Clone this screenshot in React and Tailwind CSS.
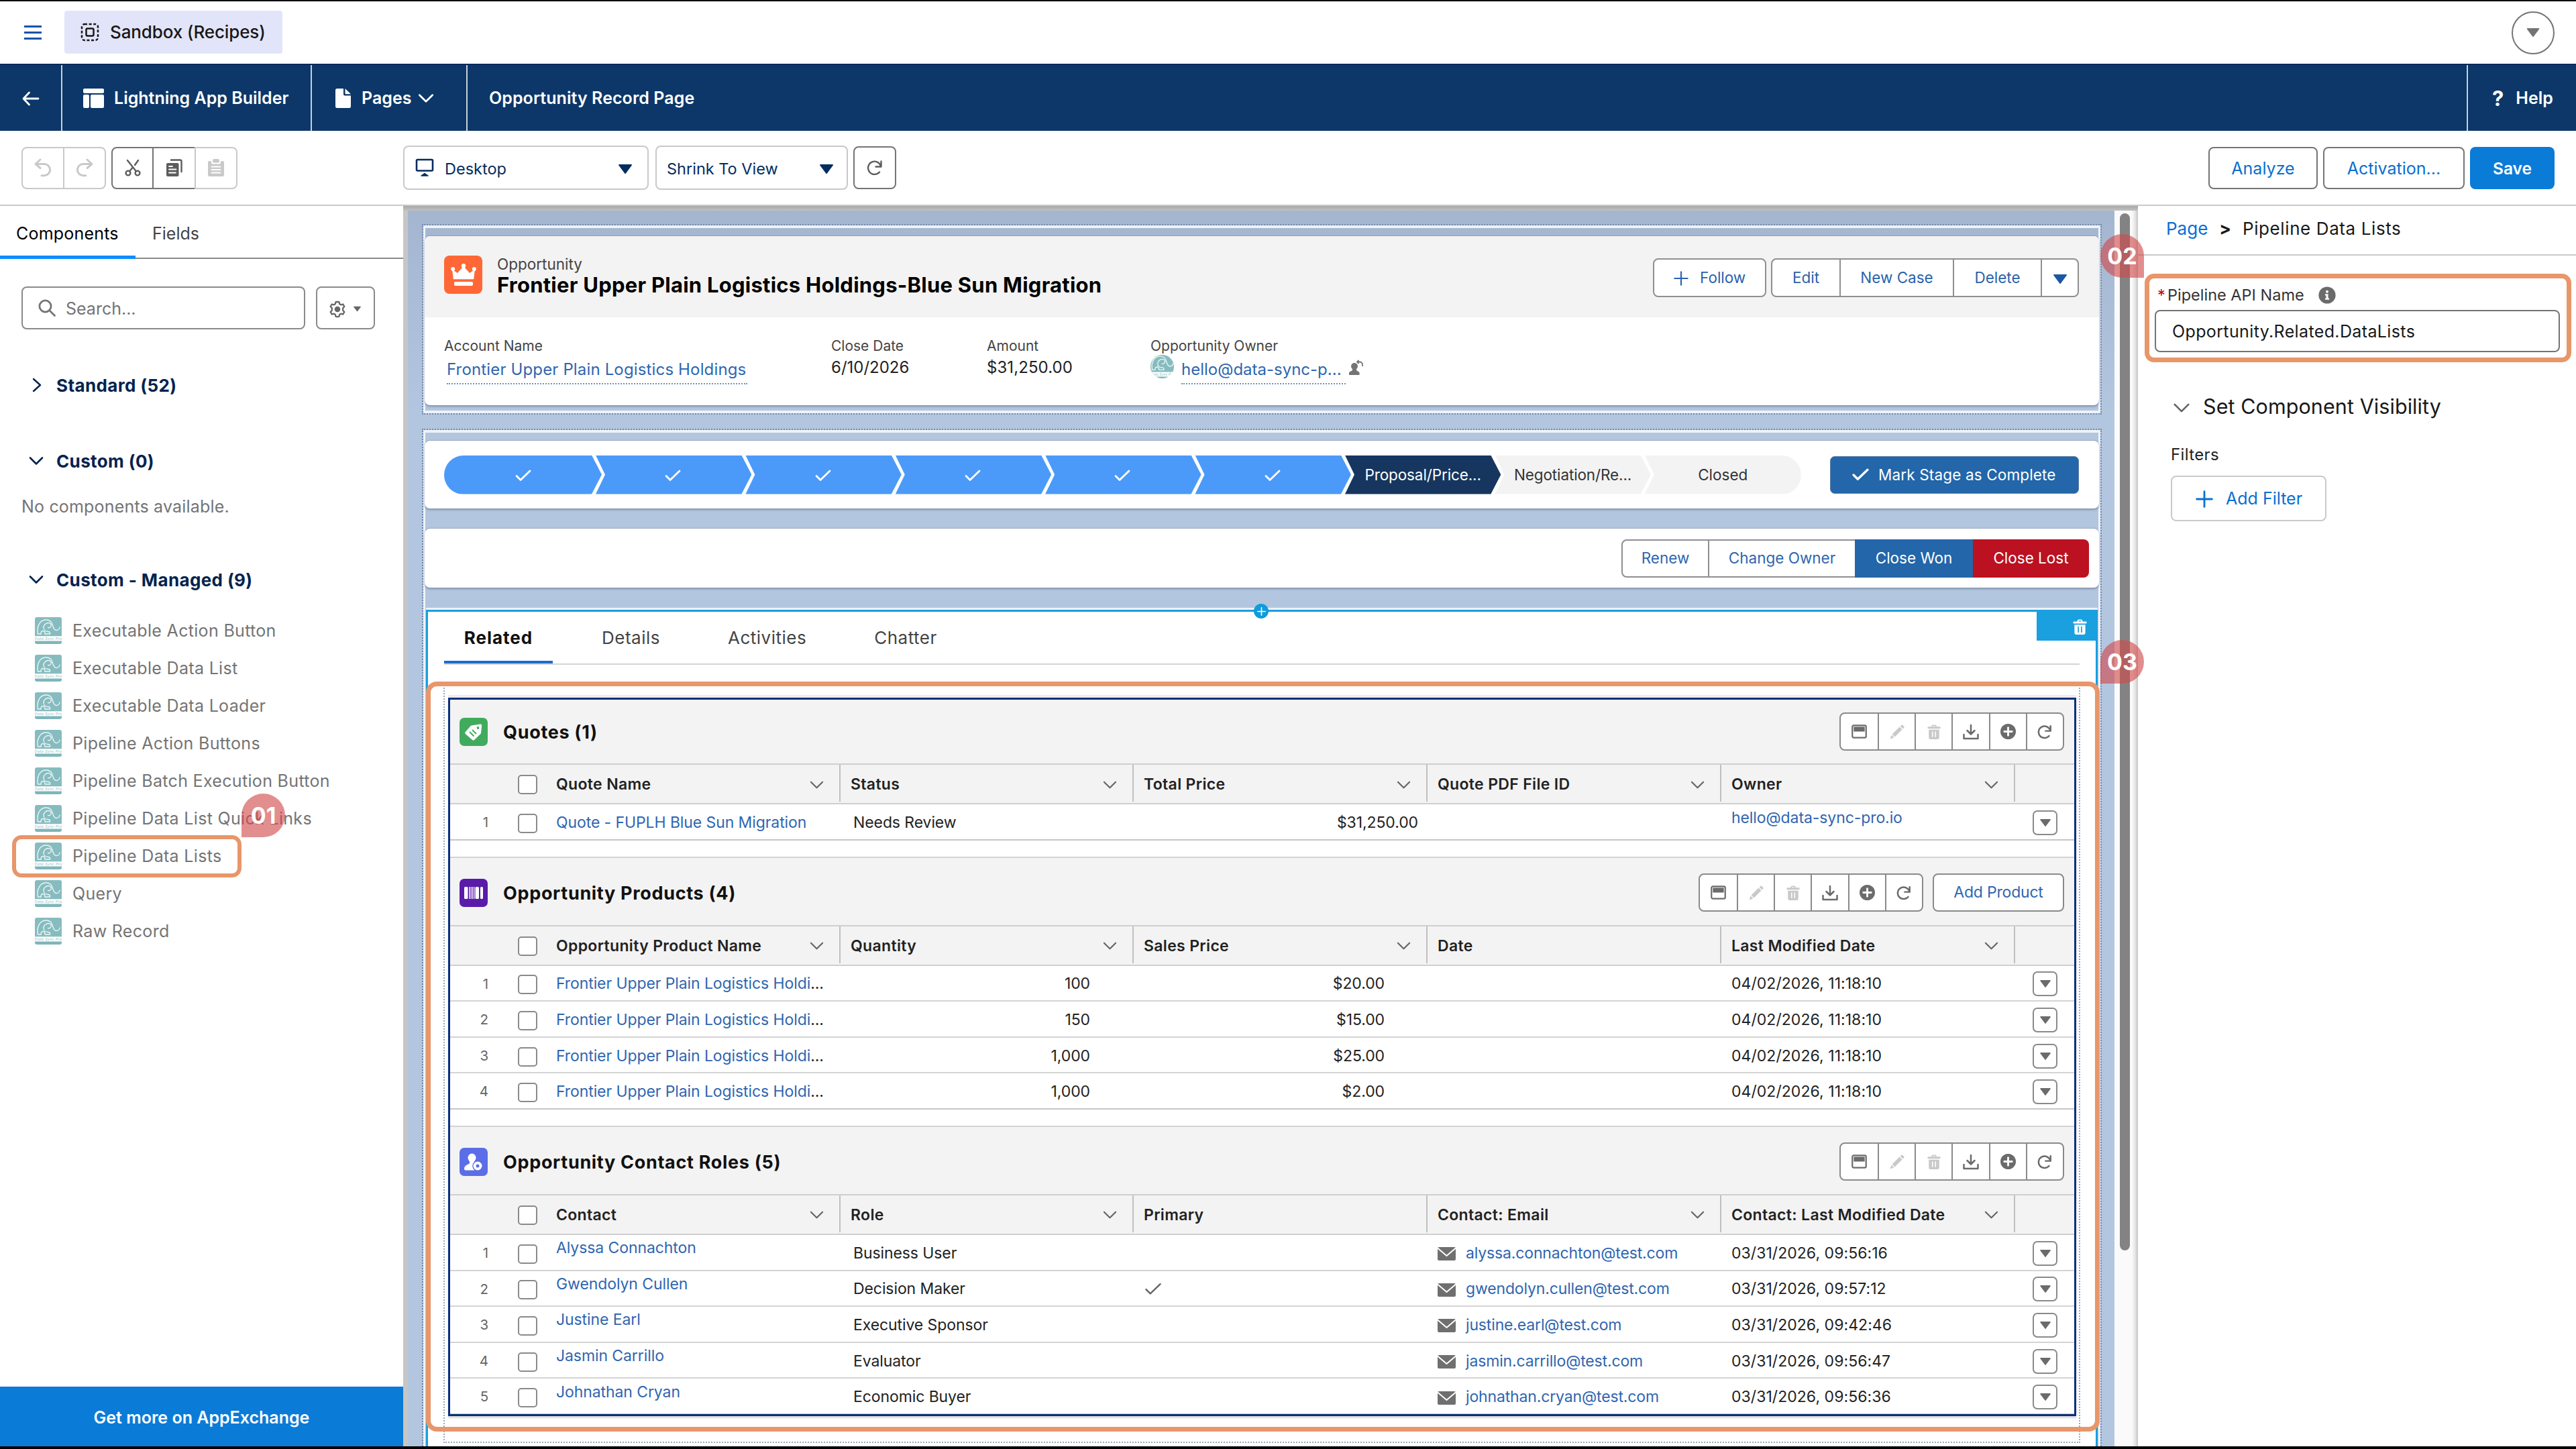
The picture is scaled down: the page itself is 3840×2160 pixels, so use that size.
import React from 'react';

/* ---------- icons ---------- */

const Caret = ({ className = 'w-5 h-[14px] text-[#032d60]' }) => (
  <svg viewBox="0 0 20 14" className={className} fill="currentColor"><path d="M1 0h18a1 1 0 0 1 .8 1.6l-8.9 11.8a1 1 0 0 1-1.7 0L.3 1.6A1 1 0 0 1 1 0z" /></svg>
);

const ChevronDown = ({ className = 'w-[22px] h-[14px]', sw = 2.6 }) => (
  <svg viewBox="0 0 22 14" className={className} fill="none" stroke="currentColor" strokeWidth={sw} strokeLinecap="round" strokeLinejoin="round"><path d="M2 2.5l9 9 9-9" /></svg>
);

const ChevronRight = () => (
  <svg viewBox="0 0 14 22" className="w-[14px] h-[22px]" fill="none" stroke="currentColor" strokeWidth="2.4" strokeLinecap="round" strokeLinejoin="round"><path d="M2 2l10 9-10 9" /></svg>
);

const Check = ({ className = 'w-6 h-[18px]', sw = 2.8 }) => (
  <svg viewBox="0 0 24 18" className={className} fill="none" stroke="currentColor" strokeWidth={sw} strokeLinecap="round" strokeLinejoin="round"><path d="M2 9.5l6 6L22 2" /></svg>
);

const Plus = ({ className = 'w-6 h-6', sw = 2.4 }) => (
  <svg viewBox="0 0 24 24" className={className} fill="none" stroke="currentColor" strokeWidth={sw} strokeLinecap="round"><path d="M12 1.5v21M1.5 12h21" /></svg>
);

const Undo = ({ className = '' }) => (
  <svg viewBox="0 0 26 28" className={'w-[26px] h-[28px] ' + className} fill="none" stroke="currentColor" strokeWidth="3" strokeLinecap="round" strokeLinejoin="round">
    <path d="M9 2L2 8.5l7 6M2.5 8.5H15a8.6 8.6 0 0 1 0 17.2h-4" />
  </svg>
);

const Cut = () => (
  <svg viewBox="0 0 24 26" className="w-6 h-[26px]" fill="none" stroke="currentColor" strokeWidth="2.4" strokeLinecap="round">
    <circle cx="5" cy="21" r="3.4" /><circle cx="19" cy="21" r="3.4" /><path d="M4 2l13 16.4M20 2l-5 7M11.5 13L7 18.4" />
  </svg>
);

const Copy = () => (
  <svg viewBox="0 0 24 26" className="w-6 h-[26px]" fill="none">
    <rect x="0" y="6" width="18.5" height="20" rx="2" fill="currentColor" />
    <path d="M7 1.5h13.5a2 2 0 0 1 2 2V19" stroke="currentColor" strokeWidth="2.4" strokeLinecap="round" />
    <path d="M4 11h5M4 15.5h10.5M4 20.5h10" stroke="#fff" strokeWidth="1.8" strokeLinecap="round" />
  </svg>
);

const Paste = () => (
  <svg viewBox="0 0 24 26" className="w-6 h-[26px]">
    <path d="M2 3h3v2.5a2 2 0 0 0 2 2h10a2 2 0 0 0 2-2V3h3a2 2 0 0 1 2 2v19a2 2 0 0 1-2 2H2a2 2 0 0 1-2-2V5a2 2 0 0 1 2-2z" fill="currentColor" />
    <rect x="7" y="0" width="10" height="5.5" rx="2" fill="currentColor" />
    <path d="M5.5 11.5h13M5.5 16h13M5.5 20.5h13" stroke="#fff" strokeWidth="1.8" strokeLinecap="round" />
  </svg>
);

const Refresh = ({ className = 'w-6 h-6', sw = 2.4 }) => (
  <svg viewBox="0 0 24 24" className={className} fill="none" stroke="currentColor" strokeWidth={sw} strokeLinecap="round" strokeLinejoin="round">
    <path d="M21.5 2.5v8h-8M21 10A9.600 9.600 0 1 0 19 18.5" />
  </svg>
);

const SearchIcon = () => (
  <svg viewBox="0 0 26 26" className="w-[26px] h-[26px]" fill="none" stroke="currentColor" strokeWidth="2.8" strokeLinecap="round"><circle cx="10.5" cy="10.5" r="8.6" /><path d="M17 17l7.5 7.5" /></svg>
);

const Gear = () => (
  <svg viewBox="0 0 26 26" className="w-[26px] h-[26px]" fill="none" stroke="currentColor">
    <path d="M13 1.8l2.5.4.8 3 2 1.1 3-.8 2 3.5-2.1 2.2v3.600l2.100 2.200-2 3.500-3-.8-2 1.100-.8 3-2.500.4-2.500-.4-.8-3-2-1.100-3 .8-2-3.500 2.100-2.200v-3.600L2.700 9l2-3.500 3 .8 2-1.100.8-3z" strokeWidth="2.3" strokeLinejoin="round" />
    <circle cx="13" cy="13" r="3.3" fill="currentColor" strokeWidth="2" />
  </svg>
);

const Desktop = () => (
  <svg viewBox="0 0 28 28" className="w-7 h-7" fill="none" stroke="currentColor" strokeWidth="2.6" strokeLinejoin="round">
    <rect x="2" y="2" width="24" height="16.5" rx="1.5" /><path d="M9 26l5-3.5 5 3.5z" fill="currentColor" strokeWidth="1.5" />
  </svg>
);

const SandboxIcon = () => (
  <svg viewBox="0 0 28 28" className="w-7 h-7" fill="none" stroke="#181818" strokeWidth="2.5">
    <rect x="2" y="2" width="24" height="24" rx="4" strokeDasharray="4 2.6" />
    <rect x="8.5" y="8.5" width="11" height="11" rx="2" />
  </svg>
);

const Elephant = ({ className = 'w-10 h-10' }) => (
  <svg viewBox="0 0 40 40" className={className}>
    <path d="M3 0h34a3 3 0 0 1 3 3v25.500H0V3a3 3 0 0 1 3-3z" fill="#86bcbf" />
    <rect y="28.5" width="40" height="7" fill="#fff" />
    <path d="M0 35.500h40V37a3 3 0 0 1-3 3H3a3 3 0 0 1-3-3z" fill="#7db6ba" />
    <g fill="none" stroke="#eaf5f5" strokeWidth="1.4" strokeLinecap="round">
      <path d="M9 25H4.500C2.500 14 7 4.500 16 4c5-.2 8 2 9.500 5.500 1.500 3.500 2 9.500 6 10 3 .2 5-1.500 5.500-4.500" />
      <path d="M9 25c0-3 1-4.500 3-4.500s3 2 3 4.500h7.500c.5-2-.5-3.500-2.500-3.500-3.500 0-7-2-7-6s3.500-7 7-7c3.500 0 5 3 4 5s-3 2.500-4.500 2" />
    </g>
    <text x="20" y="34.2" textAnchor="middle" fontSize="5.4" fontStyle="italic" fontFamily="Inter" fill="#8fbfc2">Data Sync Pro</text>
  </svg>
);

const TrashIcon = ({ className = 'w-[22px] h-6', hole = '#fff' }) => (
  <svg viewBox="0 0 22 24" className={className}>
    <path d="M7 3.500V2.500a2 2 0 0 1 2-2h4a2 2 0 0 1 2 2v1h5.500a1 1 0 0 1 1 1v1.300a1 1 0 0 1-1 1h-19a1 1 0 0 1-1-1V4.500a1 1 0 0 1 1-1zM9 3.500h4V2.400H9z" fill="currentColor" fillRule="evenodd" />
    <path d="M2.500 8.500h17V21a3 3 0 0 1-3 3h-11a3 3 0 0 1-3-3z" fill="currentColor" />
    <path d="M8.500 12v8M13.500 12v8" stroke={hole} strokeWidth="1.8" strokeLinecap="round" />
  </svg>
);

const toolIcons = {
  panel: <svg viewBox="0 0 22 20" className="w-[23px] h-[21px]"><rect x="1.2" y="1.2" width="19.6" height="17.6" rx="2" fill="none" stroke="currentColor" strokeWidth="2.1" /><rect x="3.2" y="3.2" width="15.600" height="6.800" fill="currentColor" /></svg>,
  edit: <svg viewBox="0 0 22 22" className="w-[22px] h-[22px]" fill="currentColor"><path d="M3.500 14.500L14.500 3.500l4 4-11 11zM15.600 2.400l1.500-1.500a1.500 1.500 0 0 1 2.100 0l1.900 1.900a1.500 1.500 0 0 1 0 2.100l-1.500 1.500zM2.600 15.600l3.800 3.800L.5 21.500z" /></svg>,
  trash: <TrashIcon className="w-5 h-[22px]" />,
  download: <svg viewBox="0 0 24 24" className="w-6 h-6" fill="none" stroke="currentColor" strokeWidth="2.5" strokeLinecap="round" strokeLinejoin="round"><path d="M12 2v13M6.500 10l5.500 5.500 5.500-5.500M1.500 16v6h21v-6" /></svg>,
  add: <svg viewBox="0 0 24 24" className="w-[23px] h-[23px]"><circle cx="12" cy="12" r="12" fill="currentColor" /><path d="M12 6v12M6 12h12" stroke="#fff" strokeWidth="3" strokeLinecap="round" /></svg>,
  refresh: <Refresh className="w-[22px] h-[22px]" sw={2.7} />,
};

/* ---------- top bars ---------- */

function TopBar() {
  return (
    <div className="h-[95px] shrink-0 border-t-2 border-black flex items-center pl-9 pr-8">
      <div className="w-[26px] flex flex-col gap-[6px]">
        <i className="h-[3px] bg-[#1254a8]" /><i className="h-[3px] bg-[#1254a8]" /><i className="h-[3px] bg-[#1254a8]" />
      </div>
      <div className="ml-[34px] w-[325px] h-16 rounded bg-[#e2e5f9] flex items-center pl-6 -mt-px">
        <SandboxIcon />
        <span className="ml-4 text-[26px] font-medium tracking-[-0.13px] text-[#181818]">Sandbox (Recipes)</span>
      </div>
      <div className="ml-auto size-16 rounded-full border-2 border-[#747474] grid place-items-center text-[#747474]">
        <Caret className="w-[22px] h-[13px]" />
      </div>
    </div>
  );
}

function NavBar() {
  return (
    <div className="h-[100px] shrink-0 bg-[#0c3768] border-t-2 border-[#0a2a5c] flex items-stretch text-white text-[25px] font-semibold">
      <div className="w-[93px] border-r-2 border-[#c9cfd8] flex items-center pl-[33px] pt-px">
        <svg viewBox="0 0 26 22" className="w-[26px] h-[22px]" fill="none" stroke="#fff" strokeWidth="2.8" strokeLinecap="round" strokeLinejoin="round"><path d="M10.500 2L2 11l8.500 9M2 11h22" /></svg>
      </div>
      <div className="w-[372px] border-r-2 border-[#c9cfd8] flex items-center pl-[31px] pt-px">
        <svg viewBox="0 0 31 29" className="w-[31px] h-[29px]" fill="#fff"><rect width="31" height="7" rx="2" /><rect y="9" width="9" height="20" rx="2" /><rect x="11" y="9" width="20" height="20" rx="2" /></svg>
        <span className="ml-[15px]">Lightning App Builder</span>
      </div>
      <div className="w-[232px] border-r-2 border-[#c9cfd8] flex items-center pl-[35px] pt-px">
        <svg viewBox="0 0 23 29" className="w-[23px] h-[29px]" fill="#fff"><path d="M2.500 0H12v8.500a2 2 0 0 0 2 2h9v16a2.500 2.500 0 0 1-2.500 2.500h-18A2.500 2.500 0 0 1 0 26.500v-24A2.500 2.500 0 0 1 2.500 0zM14.500 0L23 8.200h-7.500a1 1 0 0 1-1-1z" /></svg>
        <span className="ml-4">Pages</span>
        <ChevronDown className="w-6 h-[15px] ml-[10px]" sw={2.6} />
      </div>
      <div className="flex items-center pl-8 pt-px tracking-[0.06px]">Opportunity Record Page</div>
      <div className="ml-auto w-[163px] border-l-2 border-[#c9cfd8] flex items-center pl-[36px] pt-px">
        <span className="text-[31px] font-bold leading-none">?</span>
        <span className="ml-[18px]">Help</span>
      </div>
    </div>
  );
}

function ToolBar() {
  return (
    <div className="h-[112px] shrink-0 bg-white border-b-2 border-[#c9c9c9] flex items-center pl-8 pr-8">
      <div className="h-[63px] w-[126px] flex rounded-lg border-2 border-[#c9c9c9] text-[#c9c9c9]">
        <div className="flex-1 grid place-items-center border-r-2 border-[#c9c9c9]"><Undo /></div>
        <div className="flex-1 grid place-items-center"><Undo className="-scale-x-100" /></div>
      </div>
      <div className="ml-2 h-[63px] flex text-[#5c5c5c]">
        <div className="w-[63px] grid place-items-center rounded-l-lg border-2 border-[#747474]"><Cut /></div>
        <div className="w-[61px] grid place-items-center border-y-2 border-[#747474]"><Copy /></div>
        <div className="w-16 grid place-items-center rounded-r-lg border-2 border-[#c9c9c9] text-[#c9c9c9]"><Paste /></div>
      </div>
      <div className="ml-[247px] w-[366px] h-[66px] rounded-lg border-2 border-[#c9c9c9] flex items-center pl-4 pr-[23px] pt-[3px] text-[#032d60] text-[23.5px]">
        <span className="-mt-1"><Desktop /></span><span className="ml-4">Desktop</span><span className="ml-auto"><Caret /></span>
      </div>
      <div className="ml-[10px] w-[287px] h-[66px] rounded-lg border-2 border-[#c9c9c9] flex items-center pl-[15px] pr-5 pt-[3px] text-[#032d60] text-[23.5px]">
        Shrink To View<span className="ml-auto"><Caret /></span>
      </div>
      <div className="ml-2 size-[64px] rounded-lg border-2 border-[#747474] grid place-items-center text-[#5c5c5c]"><Refresh /></div>
      <div className="ml-auto flex gap-2 text-[25px] text-[#0b6fd0]">
        <div className="w-[163px] h-[63px] rounded-lg border-2 border-[#747474] grid place-items-center pt-[2px]">Analyze</div>
        <div className="w-[211px] h-[63px] rounded-lg border-2 border-[#747474] grid place-items-center pt-[2px]">Activation...</div>
        <div className="w-[126px] h-[63px] rounded-lg bg-[#0b7bd8] grid place-items-center pt-[2px] text-white text-[24.5px] font-semibold">Save</div>
      </div>
    </div>
  );
}

/* ---------- left panel ---------- */

const managed = ['Executable Action Button', 'Executable Data List', 'Executable Data Loader', 'Pipeline Action Buttons', 'Pipeline Batch Execution Button', 'Pipeline Data List Quick Links', 'Pipeline Data Lists', 'Query', 'Raw Record'];

function Badge({ n, className }) {
  return <div className={'absolute z-20 size-[65px] bg-[#d0484a]/62 grid place-items-center text-white text-[34px] font-bold leading-none ' + className}>{n}</div>;
}

function LeftPanel() {
  return (
    <div className="w-[601px] shrink-0 bg-white flex flex-col">
      <div className="h-[79px] flex items-stretch text-[25px] border-b-2 border-[#8a8a8a]">
        <div className="relative w-[202px] pl-6 flex items-center pt-[6px] text-black tracking-[0.2px]">Components
          <i className="absolute left-0 -bottom-[2px] w-full h-[5px] bg-[#0b8dfd]" />
        </div>
        <div className="pl-[25px] flex items-center pt-[6px] text-[#444]">Fields</div>
      </div>
      <div className="mt-[41px] pl-8 flex gap-4">
        <div className="w-[423px] h-[64px] rounded-lg border-2 border-[#8a8a8a] flex items-center pl-[23px] text-[#747474]">
          <SearchIcon /><span className="ml-[15px] pt-[2px] text-[25px]">Search...</span>
        </div>
        <div className="w-[88px] h-[64px] rounded-lg border-2 border-[#8a8a8a] flex items-center pl-[17px] pt-[3px] text-[#666]">
          <Gear /><Caret className="ml-[11px] w-[11px] h-[9px]" />
        </div>
      </div>
      <Heading className="mt-[63px]" open={false}>Standard (52)</Heading>
      <Heading className="mt-[73px]" open>Custom (0)</Heading>
      <div className="mt-[28px] h-10 leading-10 pl-8 text-[25px] tracking-[0.18px] text-[#747474]">No components available.</div>
      <Heading className="mt-[69px]" open>Custom - Managed (9)</Heading>
      <div className="mt-7 flex flex-col">
        {managed.map((m) => (
          <div key={m} className="relative h-14 flex items-center pl-[52px] text-[25px] tracking-[0.32px] text-[#747474]">
            <Elephant /><span className="ml-4 pt-px">{m}</span>
            {m === 'Pipeline Data Lists' && (
              <>
                <div className="absolute left-[18px] -top-[3px] w-[342px] h-[63px] rounded-[14px] border-[6px] border-[#e8966a]" />
                <Badge n="01" className="left-[360px] -top-[65px] rounded-full rounded-bl-[4px] tracking-normal" />
              </>
            )}
          </div>
        ))}
      </div>
      <div className="mt-auto h-[89px] bg-[#0b7bd8] grid place-items-center pt-[3px] text-white text-[25px] font-semibold">Get more on AppExchange</div>
    </div>
  );
}

function Heading({ children, open, className }) {
  return (
    <div className={'h-10 flex items-center text-[#03234d] ' + className}>
      <span className="w-[84px] pl-[43px] flex">{open ? <ChevronDown /> : <span className="ml-[5px]"><ChevronRight /></span>}</span>
      <span className="pt-px text-[26px] font-bold tracking-[0.38px]">{children}</span>
    </div>
  );
}

/* ---------- preview ---------- */

const cardCls = '-mx-px rounded-[8px] bg-white shadow-[0_2px_3px_rgba(60,80,110,0.45),0_-1px_1px_rgba(120,130,150,0.4)] overflow-hidden';

function RecordHeader() {
  return (
    <div className={'mt-3 h-[252px] ' + cardCls}>
      <div className="h-[121px] bg-[#f3f3f3] pl-[29px] pr-[30px] pt-[29px] flex">
        <div className="size-[57px] rounded-lg bg-[#ff6836] grid place-items-center">
          <svg viewBox="0 0 38 34" className="w-[38px] h-[34px]" fill="#fff">
            <path d="M4.500 22.500L3 10l7 5L19 5l9 10 7-5-1.500 12.500z" strokeLinejoin="round" stroke="#fff" strokeWidth="1.5" />
            <circle cx="3.2" cy="8" r="3" /><circle cx="19" cy="3.2" r="3.2" /><circle cx="34.8" cy="8" r="3" />
            <rect x="5" y="27" width="28" height="6" rx="2" />
          </svg>
        </div>
        <div className="ml-[22px]">
          <div className="h-[26px] leading-[26px] text-[22.5px] text-[#444]">Opportunity</div>
          <div className="h-9 leading-9 text-[31px] font-bold tracking-[0.25px] text-black">Frontier Upper Plain Logistics Holdings-Blue Sun Migration</div>
        </div>
        <div className="ml-auto mt-[4px] h-[58px] flex text-[22.5px] text-[#2a62ac]">
          <div className="w-[169px] rounded-lg border-2 border-[#8f8f8f] bg-white flex items-center pl-[29px]"><Plus className="w-[22px] h-[22px] mt-[2px]" /><span className="ml-[17px] pt-px">Follow</span></div>
          <div className="ml-[7px] w-[459px] rounded-lg border-2 border-[#8f8f8f] bg-white flex">
            <div className="w-[102px] border-r-2 border-[#8f8f8f] grid place-items-center pt-px">Edit</div>
            <div className="w-[169px] border-r-2 border-[#8f8f8f] grid place-items-center pt-px">New Case</div>
            <div className="w-[131px] border-r-2 border-[#8f8f8f] grid place-items-center pt-px">Delete</div>
            <div className="flex-1 grid place-items-center"><Caret className="w-5 h-[14px] mt-1 text-[#1b57a6]" /></div>
          </div>
        </div>
      </div>
      <div className="pl-[29px] pt-[30px] grid grid-cols-[577px_232px_244px_auto] text-[24px] text-[#222]">
        <Field label="Account Name"><span className="inline-block h-11 leading-[44px] ml-1 pr-[2px] text-[#2f66b0] border-b-2 border-dotted border-[#6e8fc4] tracking-[0.15px]">Frontier Upper Plain Logistics Holdings</span></Field>
        <Field label="Close Date"><span className="leading-[38px]">6/10/2026</span></Field>
        <Field label="Amount"><span className="leading-[38px] tracking-[0.07px]">$31,250.00</span></Field>
        <Field label="Opportunity Owner">
          <div className="flex items-start">
            <div className="size-[35px] rounded-full overflow-hidden"><Elephant className="w-[35px] h-[35px] scale-110" /></div>
            <span className="ml-[11px] h-11 leading-[44px] pr-[6px] text-[#2f66b0] border-b-2 border-dotted border-[#6e8fc4]">hello@data-sync-p...</span>
            <svg viewBox="0 0 22 24" className="ml-[5px] mt-[7px] w-[22px] h-6" fill="#747474">
              <circle cx="8" cy="10" r="5" /><path d="M5 13h6v3l4.500 3V23H0v-4l5-3z" />
              <path d="M12 3.500h4a4 4 0 0 1 4 4V10M14.500 1L12 3.500 14.500 6" fill="none" stroke="#747474" strokeWidth="1.8" />
            </svg>
          </div>
        </Field>
      </div>
    </div>
  );
}

function Field({ label, children }) {
  return (
    <div className="whitespace-nowrap">
      <div className="h-[26px] leading-[26px] text-[21px] text-[#444]">{label}</div>
      {children}
    </div>
  );
}

function PathCard() {
  const mid = 'relative z-0 w-[232.4px] -ml-[9px] h-full grid place-items-center pt-px text-[22.5px] tracking-[-0.12px] [clip-path:polygon(0_0,calc(100%-15px)_0,100%_50%,calc(100%-15px)_100%,0_100%,14px_50%)] ';
  return (
    <div className={'mt-3 h-[101px] pl-[29px] pr-[30px] flex items-center ' + cardCls}>
      <div className="flex h-[58px]">
        <div className="w-[235px] h-full bg-[#4b9afa] text-white grid place-items-center rounded-l-full [clip-path:polygon(0_0,calc(100%-15px)_0,100%_50%,calc(100%-15px)_100%,0_100%)]"><Check className="w-6 h-[18px] mt-[2px]" /></div>
        {[1, 2, 3, 4, 5].map((i) => <div key={i} className={mid + 'bg-[#4b9afa] text-white'}><Check className="w-6 h-[18px] -ml-[2px] mt-[2px]" /></div>)}
        <div className={mid + 'bg-[#16365f] text-white'}>Proposal/Price...</div>
        <div className={mid + 'bg-[#f3f3f3] text-[#333]'}>Negotiation/Re...</div>
        <div className="w-[233px] -ml-[9px] h-full bg-[#f3f3f3] text-[#333] grid place-items-center pt-px text-[22.5px] rounded-r-full [clip-path:polygon(0_0,100%_0,100%_100%,0_100%,14px_50%)]">Closed</div>
      </div>
      <div className="ml-auto w-[371px] h-[56px] rounded-[7px] bg-[#2366a9] border border-[#5c7ea6] text-white flex items-center pl-8 text-[22.5px]">
        <Check className="w-[25px] h-[19px]" sw={3.2} /><span className="ml-[14px] pt-px tracking-[0.15px]">Mark Stage as Complete</span>
      </div>
    </div>
  );
}

function ActionCard() {
  return (
    <div className={'mt-[30px] h-[88px] pr-[15px] flex items-center ' + cardCls}>
      <div className="ml-auto h-[57px] flex text-[22.5px] text-[#2f66b0]">
        <div className="w-[131px] grid place-items-center pt-px rounded-l-lg border-2 border-[#8f8f8f]">Renew</div>
        <div className="w-[217px] grid place-items-center pt-px border-y-2 border-[#8f8f8f]">Change Owner</div>
        <div className="w-[176px] grid place-items-center pt-px bg-[#2366a9] text-white">Close Won</div>
        <div className="w-[173px] grid place-items-center pt-px rounded-r-lg bg-[#bb1121] text-white">Close Lost</div>
      </div>
    </div>
  );
}

/* ---------- data lists ---------- */

const gridCls = 'grid grid-cols-[582px_437px_438px_438px_438px_1fr]';

function Box() {
  return <i className="block size-[29px] rounded-[5px] border-2 border-[#8a8a8a] bg-white" />;
}

function Tools() {
  return (
    <div className="h-[57px] flex rounded-lg border-2 border-[#8a8a8a] bg-white overflow-hidden">
      {['panel', 'edit', 'trash', 'download', 'add', 'refresh'].map((k, i) => (
        <div key={k} className={'w-[55.2px] grid place-items-center ' + (i ? 'border-l-2 border-[#8a8a8a] ' : '') + (k === 'edit' || k === 'trash' ? 'text-[#c9c9c9]' : 'text-[#6b6b6b]')}>{toolIcons[k]}</div>
      ))}
    </div>
  );
}

function ListSection({ icon, title, extra, cols, rows, first }) {
  return (
    <div className={first ? '' : 'mt-6 border-t-2 border-[#d4d4d4]'}>
      <div className={(first ? 'h-[95px]' : 'h-[100px] pt-1') + ' bg-[#f3f3f3] flex items-center pl-[14px] pr-[15px]'}>
        {icon}
        <span className="ml-[23px] pt-px text-[27px] font-bold tracking-[0.68px] text-[#111]">{title}</span>
        <div className="ml-auto flex gap-[14px]">
          <Tools />
          {extra && <div className="w-[196px] h-[57px] rounded-lg border-2 border-[#8a8a8a] bg-white grid place-items-center text-[23px] tracking-[-0.2px] text-[#2f66b0]">{extra}</div>}
        </div>
      </div>
      <div className={'h-[61px] bg-[#f3f3f3] border-t-2 border-b-2 border-[#cfcfcf] text-[23px] font-semibold tracking-[0.33px] text-[#222] ' + gridCls}>
        {cols.map((c, i) => (
          <div key={c.t} className={'flex items-center pr-[23px] pt-1 border-r-2 border-[#c0c0c0] mb-[2px] whitespace-nowrap ' + (i ? 'pl-[15px]' : 'pl-[101px]')}>
            {i === 0 && <span className="mr-7"><Box /></span>}
            {c.t}
            {!c.plain && <ChevronDown className="ml-auto w-[21px] h-[14px] text-[#666]" sw={2.3} />}
          </div>
        ))}
      </div>
      {rows.map((r, n) => (
        <div key={n} className={'h-[53.6px] border-b-2 border-[#d4d4d4] text-[23px] tracking-[-0.09px] text-[#222] last:border-[#c6c6c6] ' + gridCls}>
          <div className="flex items-center pt-[3px] whitespace-nowrap">
            <span className="w-[57px] text-right text-[20.5px] text-[#666]">{n + 1}</span>
            <span className="ml-[44px] mt-[2px]"><Box /></span>
            <span className={'ml-7 text-[#2f66b0] ' + (r.raised ? '-mt-[15px]' : '')}>{r.cells[0]}{r.cut && <span className="text-[#222]">...</span>}</span>
          </div>
          {r.cells.slice(1).map((c, i) => <div key={i} className="flex items-center pt-[3px] whitespace-nowrap">{c}</div>)}
          <div className="flex items-center pl-[26px] pt-[3px]">
            <div className="size-[37px] rounded-[7px] border-2 border-[#8a8a8a] bg-white grid place-items-center text-[#6b6b6b]"><Caret className="w-4 h-[11px]" /></div>
          </div>
        </div>
      ))}
    </div>
  );
}

const Right = ({ children, pr }) => <span className={'w-full text-right ' + pr}>{children}</span>;
const Stamp = ({ children }) => <span className="pl-[15px] tracking-[0.05px]">{children}</span>;

const quoteRows = [{ cells: ['Quote - FUPLH Blue Sun Migration', <span className="pl-[19px]">Needs Review</span>, <Right pr="pr-[14px]">$31,250.00</Right>, null, <span className="pl-[15px] -mt-[13px] text-[#2f66b0]">hello@data-sync-pro.io</span>] }];

const productRows = [['100', '$20.00'], ['150', '$15.00'], ['1,000', '$25.00'], ['1,000', '$2.00']].map(([q, p]) => ({
  cut: true,
  cells: ['Frontier Upper Plain Logistics Holdi', <Right pr="pr-[65px]">{q}</Right>, <Right pr="pr-[64px]">{p}</Right>, null, <Stamp>04/02/2026, 11:18:10</Stamp>],
}));

const Mail = () => (
  <svg viewBox="0 0 27 20" className="w-[27px] h-5"><rect width="27" height="20" rx="2" fill="#6f6f6f" /><path d="M0 1.500L13.500 13 27 1.500" fill="none" stroke="#fff" strokeWidth="2" /></svg>
);

const contactRows = [
  ['Alyssa Connachton', 'Business User', 'alyssa.connachton@test.com', '03/31/2026, 09:56:16'],
  ['Gwendolyn Cullen', 'Decision Maker', 'gwendolyn.cullen@test.com', '03/31/2026, 09:57:12'],
  ['Justine Earl', 'Executive Sponsor', 'justine.earl@test.com', '03/31/2026, 09:42:46'],
  ['Jasmin Carrillo', 'Evaluator', 'jasmin.carrillo@test.com', '03/31/2026, 09:56:47'],
  ['Johnathan Cryan', 'Economic Buyer', 'johnathan.cryan@test.com', '03/31/2026, 09:56:36'],
].map(([name, role, mail, date], i) => ({
  raised: true,
  cells: [
    name,
    <span className="pl-[19px]">{role}</span>,
    i === 1 ? <span className="pl-4 text-[#666]"><Check className="w-[26px] h-[19px]" sw={2.3} /></span> : null,
    <span className="pl-[15px] flex items-center tracking-[-0.15px] text-[#2f66b0]"><span className="mt-[2px]"><Mail /></span><span className="ml-[15px]">{mail}</span></span>,
    <Stamp>{date}</Stamp>,
  ],
}));

const iconBox = 'size-[42px] rounded-[7px] grid place-items-center ';

function DataLists() {
  return (
    <div className="ml-[5px] mr-1 mt-[18px] h-[1071px] border-[3px] border-[#0b2f7d] shadow-[0_-4px_0_#ececec,0_3px_2px_#dcdcdc] bg-white overflow-hidden">
      <ListSection
        first
        icon={<div className={iconBox + 'bg-[#41ab5d]'}><svg viewBox="0 0 28 28" className="w-7 h-7"><path d="M11 4.500L24 2.500a2 2 0 0 1 2.200 2L25 15.500a3 3 0 0 1-.9 1.800L15 26a2 2 0 0 1-2.800 0L1.700 17a2 2 0 0 1 0-2.700l7.500-8.800a3 3 0 0 1 1.800-1z" fill="#fff" /><circle cx="20.5" cy="8" r="1.9" fill="#41ab5d" /><path d="M8.500 14.500l5.500 5.500M12.500 11.500l5 5" stroke="#41ab5d" strokeWidth="1.9" strokeLinecap="round" /></svg></div>}
        title="Quotes (1)"
        cols={[{ t: 'Quote Name' }, { t: 'Status' }, { t: 'Total Price' }, { t: 'Quote PDF File ID' }, { t: 'Owner' }]}
        rows={quoteRows}
      />
      <ListSection
        icon={<div className={iconBox + 'bg-[#5a1ba9]'}><svg viewBox="0 0 28 18" className="w-7 h-[18px]" fill="#fff"><rect width="5.5" height="18" rx="1.5" /><rect x="7.5" width="1.8" height="18" /><rect x="10.8" width="1.8" height="18" /><rect x="14" width="1.3" height="18" /><rect x="16.5" width="5.5" height="18" rx="1.5" /><rect x="24" width="4" height="18" rx="1.5" /></svg></div>}
        title="Opportunity Products (4)"
        extra="Add Product"
        cols={[{ t: 'Opportunity Product Name' }, { t: 'Quantity' }, { t: 'Sales Price' }, { t: 'Date', plain: true }, { t: 'Last Modified Date' }]}
        rows={productRows}
      />
      <ListSection
        icon={<div className={iconBox + 'bg-[#5b6ee8]'}><svg viewBox="0 0 28 26" className="w-7 h-[26px]" fill="#fff"><ellipse cx="11.5" cy="7" rx="6" ry="6.5" /><path d="M8 12h7v3c1.500 1 2.500 1.200 3 2l-3 8.500H2c-1.500 0-2-1-2-2.500 0-4 4-5.500 7-7 .8-.4 1-1 1-2z" /><circle cx="20" cy="19" r="7.8" fill="#5b6ee8" /><circle cx="20" cy="19" r="6.5" /><circle cx="20" cy="19" r="2.5" fill="#5b6ee8" /></svg></div>}
        title="Opportunity Contact Roles (5)"
        cols={[{ t: 'Contact' }, { t: 'Role' }, { t: 'Primary', plain: true }, { t: 'Contact: Email' }, { t: 'Contact: Last Modified Date' }]}
        rows={contactRows}
      />
    </div>
  );
}

function TabSet() {
  return (
    <div className="relative mx-px mt-[33px] h-[1300px] shadow-[0_-3px_0_#eef2f8] border-[3px] border-[#1a9fdf] bg-white">
      <div className="mx-6 h-[79px] border-b-2 border-[#d4d4d4] flex items-center text-[26px] tracking-[0.5px] text-[#444]">
        <div className="relative w-[162px] h-full grid place-items-center font-bold tracking-[1px] text-[#111]">Related
          <i className="absolute left-0 bottom-0 w-full h-[4px] bg-[#1b6ccb]" />
        </div>
        <span className="ml-[73px]">Details</span>
        <span className="ml-[101px]">Activities</span>
        <span className="ml-[101px]">Chatter</span>
      </div>
      <div className="mx-[23px] mt-[29px] h-[1131px] border-2 border-dotted border-[#9aa6bd]">
        <DataLists />
      </div>
      <div className="absolute right-0 top-0 w-[88px] h-[43px] bg-[#1a9fdf] text-white"><TrashIcon className="absolute left-[54px] top-[10px] w-[21px] h-[25px]" hole="#1a9fdf" /></div>
      <div className="absolute left-[1231px] -top-[12px] size-[22px] rounded-full bg-[#0f9bdc] grid place-items-center text-white"><Plus className="w-[13px] h-[13px]" sw={3} /></div>
      <div className="absolute -left-[3px] top-[104px] w-[2495px] h-[1118px] rounded-[16px] border-[7px] border-[#e8966a]" />
    </div>
  );
}

function Preview() {
  const frame = 'border-2 border-dotted border-[#7288ae]';
  return (
    <div className="relative w-[2586px] shrink-0 bg-linear-to-b from-[#a8a8a8] to-[#c6c6c6] to-[8px] pt-[7px] pl-[7px] flex">
      <div className="w-[2544px] h-full overflow-hidden bg-linear-to-b from-[#a4b6cf] to-[#b3c6df] to-[300px] pl-[21px] pr-[19px] pt-5">
        <div className={'h-[284px] ' + frame}>
          <div className="h-full border-x-[3px] border-y-4 border-[#eef2f8]"><RecordHeader /></div>
        </div>
        <div className={'mt-[21px] h-[1700px] ' + frame}>
          <div className="h-full border-x-[3px] border-y-4 border-[#eef2f8]">
            <PathCard />
            <ActionCard />
            <TabSet />
          </div>
        </div>
      </div>
      <div className="w-[35px] h-full bg-linear-to-r from-[#fafafa] from-[26px] via-[#e4e4e4] via-[31px] to-[#c4c4c4] pl-2 pt-1">
        <div className="w-[15px] h-[1546px] rounded-full bg-[#838383]" />
      </div>
      <Badge n="03" className="left-[2530px] top-[647px] rounded-full rounded-bl-[4px]" />
    </div>
  );
}

/* ---------- properties panel ---------- */

function RightPanel() {
  return (
    <div className="relative flex-1 bg-white">
      <div className="h-[74px] border-b-2 border-[#c9c9c9] flex items-center pl-[42px] pb-[5px] text-[26px]">
        <span className="text-[#0b6fd0]">Page</span>
        <span className="ml-[17px] font-bold text-[#181818]">&gt;</span>
        <span className="ml-[17px] tracking-[0.6px] text-[#181818]">Pipeline Data Lists</span>
      </div>
      <Badge n="02" className="-left-[56px] top-[42px] rounded-full rounded-br-[4px]" />
      <div className="ml-[10px] mt-[27px] w-[636px] h-[132px] rounded-[14px] border-[7px] border-[#e8966a] pl-2 pt-3">
        <div className="h-[26px] flex items-center pl-1 text-[23.5px] text-[#333]">
          <span className="text-[#ba0517] w-[15px]">*</span>Pipeline API Name
          <svg viewBox="0 0 26 26" className="ml-[21px] w-[26px] h-[26px]"><circle cx="13" cy="13" r="12.6" fill="#6b6b6b" /><circle cx="13" cy="7.8" r="2" fill="#fff" /><path d="M10 11.200h4.500v6.300h1.500v2.300H10v-2.300h1.500v-4H10z" fill="#fff" /></svg>
        </div>
        <div className="mt-[9px] w-[604px] h-[63px] rounded-lg border-2 border-[#747474] flex items-center pl-6 pt-[2px] text-[25px] tracking-[0.37px] text-[#181818]">Opportunity.Related.DataLists</div>
      </div>
      <div className="mt-[46px] h-10 flex items-center pl-[52px]">
        <ChevronDown className="w-[26px] h-[16px] mt-1 text-[#666]" sw={2.4} />
        <span className="ml-[19px] pt-px text-[30.5px] tracking-[0.08px] text-[#181818]">Set Component Visibility</span>
      </div>
      <div className="mt-[32px] h-10 leading-10 pl-[49px] text-[24px] tracking-[0.36px] text-[#222]">Filters</div>
      <div className="ml-[49px] mt-[11px] w-[232px] h-[68px] rounded-lg border-2 border-[#c9c9c9] flex items-center pl-[35px] pt-px text-[25px] text-[#0b6fd0]">
        <Plus className="w-[26px] h-[26px]" sw={2.6} /><span className="ml-[19px]">Add Filter</span>
      </div>
    </div>
  );
}

export default function App() {
  return (
    <div className="w-[3840px] h-[2160px] overflow-hidden bg-white flex flex-col font-['Inter',sans-serif] leading-none antialiased border-b-4 border-black">
      <TopBar />
      <NavBar />
      <ToolBar />
      <div className="flex-1 min-h-0 flex">
        <LeftPanel />
        <Preview />
        <RightPanel />
      </div>
    </div>
  );
}
